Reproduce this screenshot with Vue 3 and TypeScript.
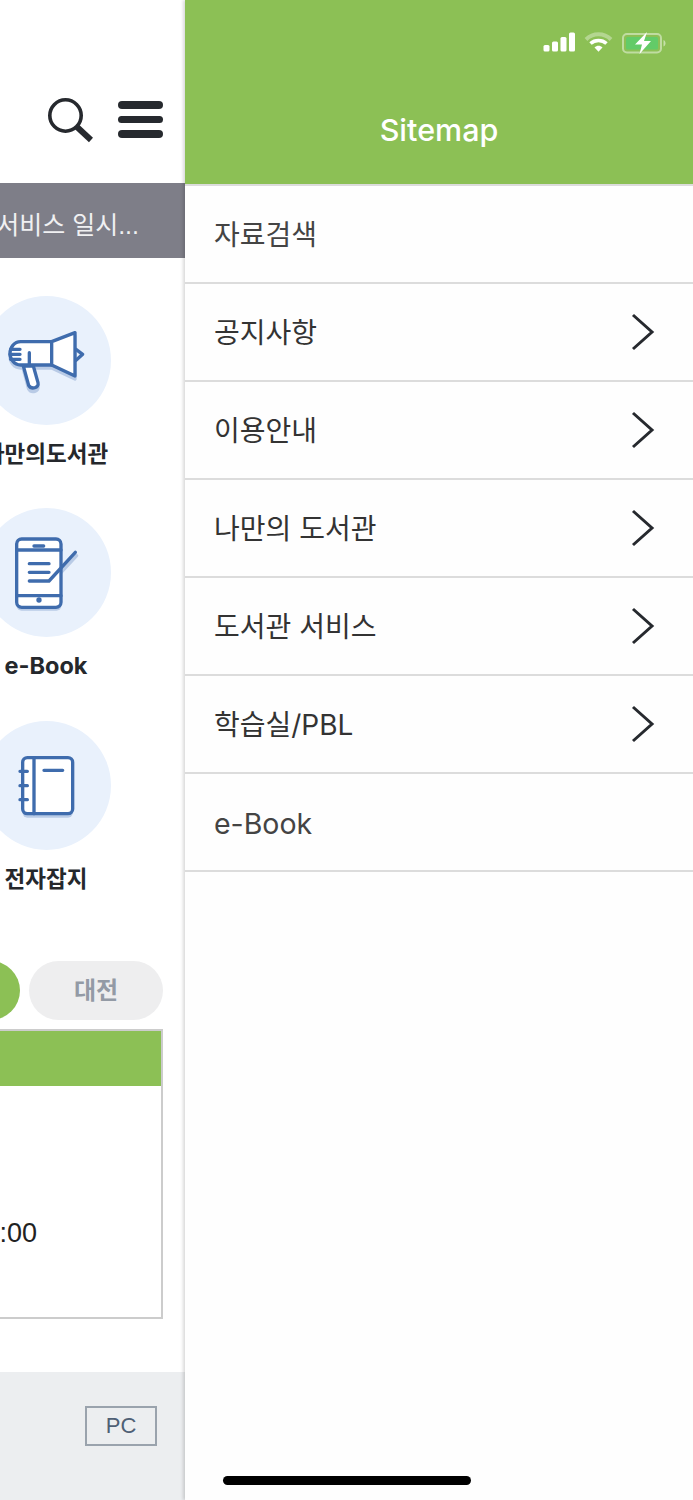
<script setup lang="ts">
const menus = [
  { name: '자료검색', more: false, latin: false },
  { name: '공지사항', more: true, latin: false },
  { name: '이용안내', more: true, latin: false },
  { name: '나만의 도서관', more: true, latin: false },
  { name: '도서관 서비스', more: true, latin: false },
  { name: '학습실/PBL', more: true, latin: false },
  { name: 'e-Book', more: false, latin: true }
]
</script>

<template>
  <div class="screen">
    <section class="main">
      <header class="top">
        <svg class="search" width="46" height="46" viewBox="0 0 46 46" fill="none" stroke="#26292e">
          <circle cx="18.500" cy="18.500" r="15.700" stroke-width="3.600" />
          <path d="M29.500 29.500 44 43" stroke-width="6" />
        </svg>
        <div class="burger"><i></i><i></i><i></i></div>
      </header>

      <div class="notice"><span>서비스 일시...</span></div>

      <div class="tiles">
        <div class="tile">
          <div class="circle">
            <svg width="80" height="80" viewBox="18 120 240 240" stroke-width="10" stroke-linecap="round" stroke-linejoin="round">
              <g fill="#b9cbe6" stroke="#b9cbe6" transform="translate(0 9)">
                <path d="M155 182H62C42 182 30 200 30 217s12 35 32 35h93l70 33V155z" />
                <path d="M70 255l16 60c8 14 32 8 28-8l-14-52z" />
              </g>
              <path d="M70 255l16 58c8 14 32 8 28-8l-14-50z" fill="#fff" stroke="#3f6cad" />
              <path d="M155 182H62C42 182 30 200 30 217s12 35 32 35h93z" fill="#fff" stroke="#3f6cad" />
              <path d="M155 182l70-27v130l-70-33z" fill="#fff" stroke="#3f6cad" />
              <path d="M228 205l20 15-20 18" fill="none" stroke="#3f6cad" />
              <path d="M32 205h28M30 220h30M32 235h28M88 215v37" fill="none" stroke="#3f6cad" />
            </svg>
          </div>
          <p class="label">나만의도서관</p>
        </div>

        <div class="tile">
          <div class="circle">
            <svg width="80" height="80" viewBox="18 127 240 240" stroke-width="10" stroke-linecap="round" stroke-linejoin="round">
              <rect x="50" y="155" width="134" height="205" rx="15" fill="#b9cbe6" />
              <path d="M150 281l80-86" fill="none" stroke="#b9cbe6" />
              <rect x="50" y="145" width="133" height="205" rx="15" fill="#fff" stroke="#3f6cad" />
              <path d="M50 178h133M50 315h133M102 166h29M88 219h59M88 245h59M88 271h59l79-86" fill="none" stroke="#3f6cad" />
              <circle cx="117" cy="328" r="8" fill="#3f6cad" />
            </svg>
          </div>
          <p class="label latin">e-Book</p>
        </div>

        <div class="tile">
          <div class="circle">
            <svg width="80" height="80" viewBox="18 134 240 240" stroke-width="10" stroke-linecap="round" stroke-linejoin="round">
              <rect x="68" y="182" width="150" height="170" rx="14" fill="#b9cbe6" />
              <rect x="68" y="172" width="150" height="168" rx="14" fill="#fff" stroke="#3f6cad" />
              <path d="M102 172v168M132 210h56M60 213h22M60 256h22M60 298h22" fill="none" stroke="#3f6cad" />
            </svg>
          </div>
          <p class="label">전자잡지</p>
        </div>
      </div>

      <div class="tabs">
        <button class="tab on"></button>
        <button class="tab">대전</button>
      </div>

      <div class="hours">
        <div class="hours-head"></div>
        <p class="hours-time">:00</p>
      </div>

      <footer class="foot">
        <span class="pc">PC</span>
      </footer>
    </section>

    <aside class="sitemap">
      <header class="sitemap-head">
        <div class="status">
          <svg width="33" height="20" viewBox="0 0 33 20" fill="#fff">
            <rect x="0.500" y="13" width="6" height="6.500" rx="1.500" />
            <rect x="9" y="9.500" width="6" height="10" rx="1.500" />
            <rect x="17.500" y="5" width="6" height="14.500" rx="1.500" />
            <rect x="26" y="0.500" width="6" height="19" rx="1.500" />
          </svg>
          <svg width="29" height="20" viewBox="0 0 29 20" fill="none">
            <path d="M2 7.500C9 0.500 20 0.500 27 7.500" stroke="#fff" stroke-opacity=".35" stroke-width="4" />
            <path d="M6.500 11.500C11 7.500 18 7.500 22.500 11.500" stroke="#fff" stroke-width="3.600" />
            <path d="M10.500 15.500c2.400-2.200 5.600-2.200 8 0L14.500 19.800z" fill="#fff" />
          </svg>
          <svg width="44" height="22" viewBox="0 0 44 22" fill="none">
            <rect x="1" y="2" width="38" height="18.500" rx="4" stroke="#fff" stroke-opacity=".45" stroke-width="2" />
            <rect x="4" y="5" width="32" height="12.500" rx="1.500" fill="#63cb68" />
            <path d="M41.500 8v6.500c1.300-.5 2-1.700 2-3.200s-.7-2.800-2-3.300z" fill="#fff" fill-opacity=".5" />
            <path d="M25 0 13 12.500h7L17.500 22 29 9h-7z" fill="#fff" />
          </svg>
        </div>
        <h1 class="sitemap-title">Sitemap</h1>
      </header>

      <ul class="menu">
        <li
          v-for="item in menus"
          :key="item.name"
          class="menu-row"
          :class="{ more: item.more, latin: item.latin }"
        >
          <span>{{ item.name }}</span>
          <svg v-if="item.more" width="24" height="38" viewBox="0 0 24 38" fill="none" stroke="#26292e" stroke-width="3">
            <path d="M2 2l19 17L2 36" />
          </svg>
        </li>
      </ul>

      <div class="home-bar"></div>
    </aside>
  </div>
</template>

<style scoped>
.screen {
  display: flex;
  width: 693px;
  height: 1500px;
  overflow: hidden;
  background: #fff;
  font-family: "Liberation Sans", "Noto Sans CJK KR", sans-serif;
}

.main {
  display: flex;
  flex-direction: column;
  flex: 0 0 185px;
  width: 185px;
  overflow: hidden;
  background: #fff;
}

.top {
  display: flex;
  justify-content: flex-end;
  gap: 25px;
  height: 183px;
  padding: 97px 22px 0 0;
  box-sizing: border-box;
}

.burger {
  display: flex;
  flex-direction: column;
  gap: 7px;
  width: 45px;
  margin-top: 4px;
}

.burger i {
  display: block;
  height: 7.500px;
  border-radius: 4px;
  background: #26292e;
}

.notice {
  display: flex;
  justify-content: flex-end;
  align-items: center;
  height: 75px;
  padding: 4px 46px 0 0;
  box-sizing: border-box;
  background: #7e7e88;
  color: #f0f0f2;
  font-size: 25px;
  white-space: nowrap;
}

.tiles {
  margin-left: -19px;
  width: 130px;
  padding-top: 38px;
}

.tile {
  display: flex;
  flex-direction: column;
  align-items: center;
  height: 212.400px;
}

.circle {
  display: flex;
  align-items: center;
  justify-content: center;
  flex: 0 0 129px;
  width: 129px;
  border-radius: 50%;
  background: #e9f1fc;
}

.label {
  margin: 15px 0 0;
  font-family: Inter, "Noto Sans CJK KR", sans-serif;
  font-size: 22.500px;
  line-height: 28px;
  font-weight: 700;
  color: #25282c;
  white-space: nowrap;
}

.label.latin {
  font-size: 23.500px;
}

.tabs {
  display: flex;
  justify-content: flex-end;
  gap: 9px;
  margin-top: 27.500px;
  padding-right: 22px;
}

.tab {
  flex: 0 0 134px;
  height: 59px;
  padding: 0 0 4px;
  border: none;
  border-radius: 30px;
  background: #eeeeef;
  color: #939aa5;
  font-family: inherit;
  font-size: 24px;
  font-weight: 700;
}

.tab.on {
  background: #8cc055;
}

.hours {
  margin: 9.500px 22px 0 -20px;
  height: 290px;
  box-sizing: border-box;
  border: 2px solid #ccc;
}

.hours-head {
  height: 55px;
  background: #8cc055;
}

.hours-time {
  margin: 131px 124px 0 0;
  text-align: right;
  font-size: 27px;
  line-height: 32px;
  color: #222;
}

.foot {
  display: flex;
  justify-content: flex-end;
  align-items: flex-start;
  margin-top: auto;
  height: 128px;
  padding: 34px 28px 0 0;
  box-sizing: border-box;
  background: #eceef0;
}

.pc {
  display: flex;
  align-items: center;
  justify-content: center;
  width: 72px;
  height: 40px;
  box-sizing: border-box;
  border: 2px solid #9aa3ad;
  color: #4f6075;
  font-size: 22px;
}

.sitemap {
  position: relative;
  flex: 1;
  background: #fefefe;
  box-shadow: -2px 0 3px rgba(0, 0, 0, 0.15);
}

.sitemap-head {
  display: flex;
  flex-direction: column;
  height: 186px;
  box-sizing: border-box;
  background: #8cc055;
  border-bottom: 2px solid #dcdcdc;
}

.status {
  display: flex;
  justify-content: flex-end;
  align-items: flex-start;
  gap: 8px;
  padding: 32px 27px 0 0;
}

.status svg:nth-child(3) {
  margin-left: 1px;
}

.sitemap-title {
  margin: 57px 0 0;
  text-align: center;
  font-family: Inter, "Noto Sans CJK KR", sans-serif;
  font-size: 30.500px;
  line-height: 38px;
  font-weight: 500;
  color: #fff;
}

.menu {
  margin: 0;
  padding: 0;
  list-style: none;
}

.menu-row {
  display: flex;
  justify-content: space-between;
  align-items: center;
  height: 98px;
  padding: 0 38px 2px 29px;
  box-sizing: border-box;
  border-bottom: 2px solid #dcdcdc;
  color: #444;
  font-family: Inter, "Noto Sans CJK KR", sans-serif;
  font-size: 28px;
}

.menu-row svg {
  margin-top: 2px;
}

.menu-row.more {
  color: #333;
}

.menu-row.latin {
  padding-top: 3px;
  padding-bottom: 0;
  font-size: 28.500px;
}

.home-bar {
  position: absolute;
  left: 38px;
  bottom: 15px;
  width: 248px;
  height: 9px;
  border-radius: 5px;
  background: #000;
}
</style>

<style>
body {
  background: #fff;
}
</style>
